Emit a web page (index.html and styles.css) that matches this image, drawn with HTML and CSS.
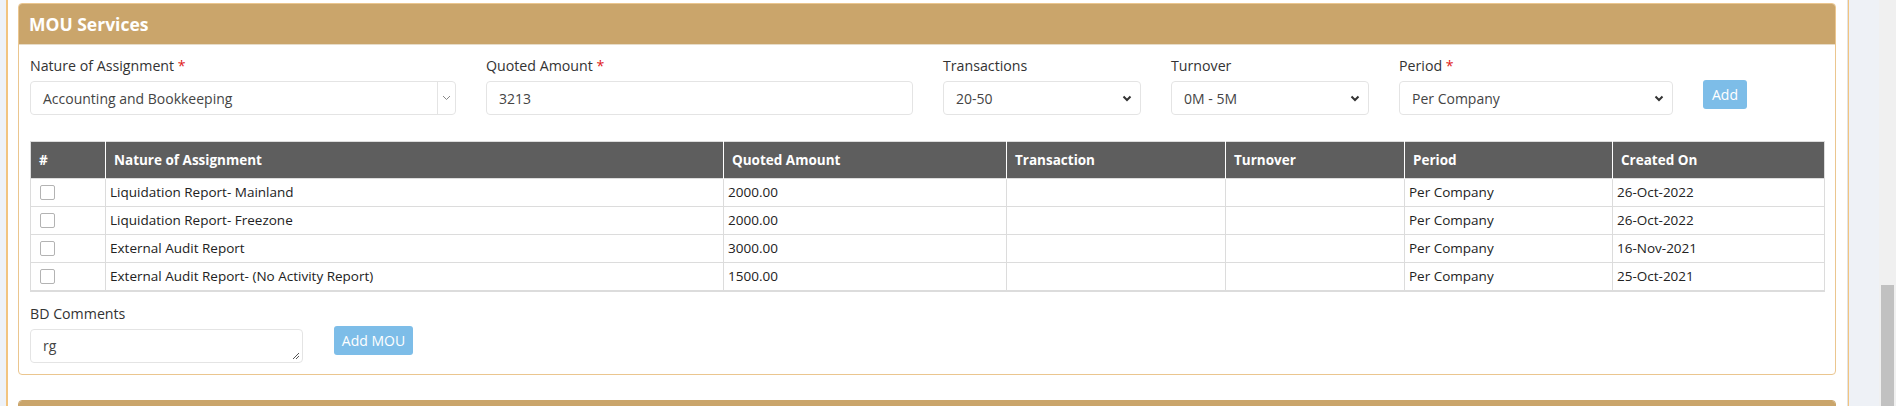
FILE: index.html
```html
<!DOCTYPE html>
<html>
<head>
<meta charset="utf-8">
<link rel="stylesheet" href="styles.css">
</head>
<body>
<div class="page">
  <div class="left-strip"></div>
  <div class="main">
    <div class="card">
      <div class="card-header">MOU Services</div>
      <div class="card-body">
        <div class="form-row">
          <div class="field f-nature">
            <label class="lbl">Nature of Assignment <span class="req">*</span></label>
            <div class="ctl select2">
              <span class="val">Accounting and Bookkeeping</span>
              <span class="s2-arrow"><svg width="9" height="6" viewBox="0 0 9 6"><path d="M1 1l3.5 3.5L8 1" fill="none" stroke="#888" stroke-width="1"/></svg></span>
            </div>
          </div>
          <div class="field f-amount">
            <label class="lbl">Quoted Amount <span class="req">*</span></label>
            <div class="ctl input"><span class="val">3213</span></div>
          </div>
          <div class="field f-trans">
            <label class="lbl">Transactions</label>
            <div class="ctl select"><span class="val">20-50</span><svg class="chev" width="10" height="7" viewBox="0 0 10 7"><path d="M1.5 1.5l3.5 3.5 3.5-3.5" fill="none" stroke="#333" stroke-width="2"/></svg></div>
          </div>
          <div class="field f-turn">
            <label class="lbl">Turnover</label>
            <div class="ctl select"><span class="val">0M - 5M</span><svg class="chev" width="10" height="7" viewBox="0 0 10 7"><path d="M1.5 1.5l3.5 3.5 3.5-3.5" fill="none" stroke="#333" stroke-width="2"/></svg></div>
          </div>
          <div class="field f-period">
            <label class="lbl">Period <span class="req">*</span></label>
            <div class="ctl select"><span class="val">Per Company</span><svg class="chev" width="10" height="7" viewBox="0 0 10 7"><path d="M1.5 1.5l3.5 3.5 3.5-3.5" fill="none" stroke="#333" stroke-width="2"/></svg></div>
          </div>
          <div class="field f-btn">
            <button class="btn btn-add">Add</button>
          </div>
        </div>

        <table class="grid">
          <colgroup>
            <col style="width:75px"><col style="width:618px"><col style="width:283px"><col style="width:219px"><col style="width:179px"><col style="width:208px"><col style="width:212px">
          </colgroup>
          <thead>
            <tr><th>#</th><th>Nature of Assignment</th><th>Quoted Amount</th><th>Transaction</th><th>Turnover</th><th>Period</th><th>Created On</th></tr>
          </thead>
          <tbody>
            <tr><td class="cb"><span class="box"></span></td><td>Liquidation Report- Mainland</td><td>2000.00</td><td></td><td></td><td>Per Company</td><td>26-Oct-2022</td></tr>
            <tr><td class="cb"><span class="box"></span></td><td>Liquidation Report- Freezone</td><td>2000.00</td><td></td><td></td><td>Per Company</td><td>26-Oct-2022</td></tr>
            <tr><td class="cb"><span class="box"></span></td><td>External Audit Report</td><td>3000.00</td><td></td><td></td><td>Per Company</td><td>16-Nov-2021</td></tr>
            <tr><td class="cb"><span class="box"></span></td><td>External Audit Report- (No Activity Report)</td><td>1500.00</td><td></td><td></td><td>Per Company</td><td>25-Oct-2021</td></tr>
          </tbody>
        </table>

        <div class="comment-row">
          <div class="field f-comment">
            <label class="lbl">BD Comments</label>
            <div class="ctl textarea"><span class="val">rg</span>
              <svg class="grip" width="9" height="9" viewBox="0 0 9 9"><path d="M8 2L2 8M8 5L5 8" stroke="#555" stroke-width="1"/></svg>
            </div>
          </div>
          <button class="btn btn-mou">Add MOU</button>
        </div>
      </div>
    </div>
    <div class="card card-next">
      <div class="card-header"></div>
    </div>
  </div>
  <div class="right-strip"></div>
  <div class="scroll-track"><div class="thumb"></div></div>
</div>
</body>
</html>
```
FILE: styles.css
```css
* { box-sizing: border-box; }
html, body { margin: 0; padding: 0; }
body {
  width: 1896px;
  height: 406px;
  overflow: hidden;
  font-family: "Open Sans", "Noto Sans", sans-serif;
  color: #333;
  background: #fff;
}
.page { display: flex; height: 406px; overflow: hidden; }
.left-strip {
  width: 8px;
  flex: none;
  background: #eef2f8;
  border-right: 2px solid #f2c47f;
}
.main {
  width: 1840px;
  flex: none;
  background: #fff;
  padding: 3px 11px 0 10px;
  border-right: 1px solid #e3e3e3;
  overflow: hidden;
}
.right-strip {
  width: 31px;
  flex: none;
  background: #eef1f6;
  border-left: 1px solid #f2c47f;
}
.scroll-track {
  width: 17px;
  flex: none;
  background: #f0f0f0;
  padding: 285px 2px 0 2px;
}
.thumb { height: 121px; width: 13px; background: #c1c1c1; }

.card {
  width: 1818px;
  border: 1px solid #ebc68f;
  border-radius: 4px;
  overflow: hidden;
  background: #fff;
}
.card-header {
  background: #caa56b;
  height: 41px;
  color: #fff;
  font-weight: 700;
  font-size: 17.5px;
  line-height: 41px;
  padding-left: 10px;
  border-bottom: 1px solid #e7dcc8;
}
.card-body { padding: 11px 11px 11px 11px; }
.card-next { margin-top: 25px; border-color: #caa56b; }

.form-row { display: flex; gap: 30px; align-items: flex-start; }
.field { display: flex; flex-direction: column; }
.lbl { font-size: 14.2px; line-height: 20px; height: 20px; margin-bottom: 5px; color: #333; }
.req { color: #e02020; }
.f-nature { width: 426px; }
.f-amount { width: 427px; }
.f-trans, .f-turn { width: 198px; }
.f-period { width: 274px; }
.f-btn { padding-top: 24px; }

.ctl {
  height: 34px;
  border: 1px solid #e4e4e4;
  border-radius: 4px;
  background: #fff;
  display: flex;
  align-items: center;
  font-size: 14px;
  color: #444;
  position: relative;
}
.ctl .val { padding-left: 12px; flex: 1; }
.select2 .s2-arrow {
  width: 18px;
  height: 100%;
  border-left: 1px solid #e4e4e4;
  display: flex;
  align-items: center;
  justify-content: center;
}
.select .val { padding-left: 12px; }
.select .chev { margin-right: 8px; }

.btn {
  border: none;
  background: #7dbde8;
  color: #fff;
  font-family: "Open Sans", "Noto Sans", sans-serif;
  font-size: 14px;
  border-radius: 3px;
  padding: 0;
  cursor: pointer;
}
.btn-add { width: 44px; height: 29px; }
.btn-mou { width: 79px; height: 29px; margin-top: 22px; }

.grid {
  margin-top: 26px;
  width: 1794px;
  table-layout: fixed;
  border-collapse: collapse;
  font-size: 13.5px;
  border-top: 1px solid #dcdcdc;
  border-bottom: 2px solid #dcdcdc;
}
.grid th {
  background: #5e5e5e;
  color: #fff;
  font-weight: 700;
  text-align: left;
  height: 37px;
  padding: 0 8px;
  border-left: 1px solid #fff;
  line-height: 20px;
}
.grid th:first-child { border-left: 1px solid #dcdcdc; }
.grid th:last-child { border-right: 1px solid #dcdcdc; }
.grid td {
  height: 28px;
  padding: 0 4px;
  border: 1px solid #dcdcdc;
  line-height: 19px;
  color: #222;
  vertical-align: middle;
}
.grid td.cb { padding-left: 9px; }
.box {
  display: block;
  width: 15px;
  height: 15px;
  border: 1px solid #b3b3b3;
  border-radius: 2px;
  background: #fff;
}

.comment-row { display: flex; gap: 31px; align-items: flex-start; margin-top: 12px; }
.f-comment { width: 273px; }
.textarea { align-items: flex-start; padding-top: 6px; }
.textarea .grip { position: absolute; right: 2px; bottom: 2px; }
```
